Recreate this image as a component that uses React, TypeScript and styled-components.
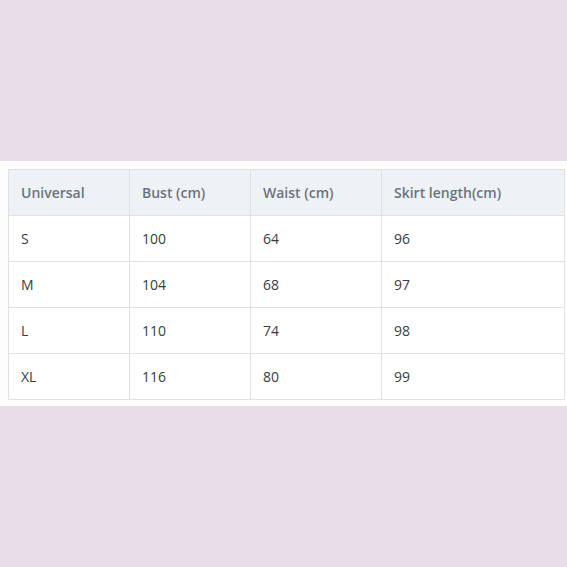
import styled, { createGlobalStyle } from 'styled-components';

const GlobalStyle = createGlobalStyle`
  html, body {
    margin: 0;
    padding: 0;
    background: #e8dde9;
  }
`

const Page = styled.div`
  width: 567px;
  height: 567px;
  background-color: #e8dde9;
  display: flex;
  flex-direction: column;
  padding-top: 161px;
  box-sizing: border-box;
  font-family: "Open Sans", "Liberation Sans", sans-serif;
`

const Band = styled.div`
  background-color: #fdfdfd;
  padding: 8px 3px 6px 8px;
`

const Table = styled.table`
  width: 556px;
  border-collapse: collapse;
  table-layout: fixed;
  border: 1px solid #dde2e6;
`

const HeadCell = styled.th<{ $w: number }>`
  width: ${p => p.$w}px;
  height: 46px;
  padding: 0 0 0 12px;
  text-align: left;
  font-size: 14px;
  font-weight: 600;
  color: #6a7480;
  background-color: #eef2f5;
  border: 1px solid #dde2e6;
  box-sizing: border-box;
`

const Cell = styled.td`
  height: 46px;
  padding: 0 0 0 12px;
  font-size: 14px;
  color: #3a3d40;
  background-color: #ffffff;
  border: 1px solid #dde2e6;
  box-sizing: border-box;
`

const columns = [
  { label: 'Universal', w: 121 },
  { label: 'Bust (cm)', w: 121 },
  { label: 'Waist (cm)', w: 131 },
  { label: 'Skirt length(cm)', w: 183 },
];

const rows = [
  ['S', '100', '64', '96'],
  ['M', '104', '68', '97'],
  ['L', '110', '74', '98'],
  ['XL', '116', '80', '99'],
];

export default function App() {
  return (
    <>
      <GlobalStyle />
      <Page>
        <Band>
          <Table>
            <thead>
              <tr>
                {columns.map(c => (
                  <HeadCell key={c.label} $w={c.w}>{c.label}</HeadCell>
                ))}
              </tr>
            </thead>
            <tbody>
              {rows.map(r => (
                <tr key={r[0]}>
                  {r.map((v, i) => <Cell key={i}>{v}</Cell>)}
                </tr>
              ))}
            </tbody>
          </Table>
        </Band>
      </Page>
    </>
  )
}
